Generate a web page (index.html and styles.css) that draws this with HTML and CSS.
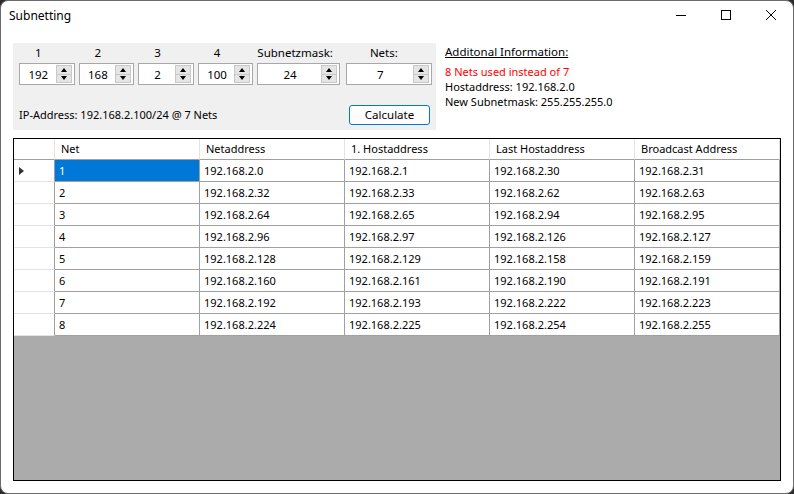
FILE: index.html
```html
<!DOCTYPE html>
<html>
<head>
<meta charset="utf-8">
<link rel="stylesheet" href="styles.css">
</head>
<body>
<div class="window">
  <div class="titlebar">
    <span class="title">Subnetting</span>
    <div class="controls">
      <span class="ctl"><svg width="12" height="12" viewBox="0 0 12 12"><path d="M1 6.5h10" stroke="#000" stroke-width="1"/></svg></span>
      <span class="ctl"><svg width="12" height="12" viewBox="0 0 12 12"><rect x="1.5" y="1.5" width="9" height="9" fill="none" stroke="#000" stroke-width="1"/></svg></span>
      <span class="ctl"><svg width="12" height="12" viewBox="0 0 12 12"><path d="M1 1l10 10M11 1L1 11" stroke="#000" stroke-width="1"/></svg></span>
    </div>
  </div>
  <div class="client">
    <div class="top">
      <div class="panel">
        <div class="fields">
          <div class="field f-oct"><div class="lbl">1</div><div class="spin"><span class="val">192</span><span class="btns"><span class="b up"></span><span class="b dn"></span></span></div></div>
          <div class="field f-oct"><div class="lbl">2</div><div class="spin"><span class="val">168</span><span class="btns"><span class="b up"></span><span class="b dn"></span></span></div></div>
          <div class="field f-oct"><div class="lbl">3</div><div class="spin"><span class="val">2</span><span class="btns"><span class="b up"></span><span class="b dn"></span></span></div></div>
          <div class="field f-oct"><div class="lbl">4</div><div class="spin"><span class="val">100</span><span class="btns"><span class="b up"></span><span class="b dn"></span></span></div></div>
          <div class="field f-mask"><div class="lbl lbl-left">Subnetzmask:</div><div class="spin"><span class="val">24</span><span class="btns"><span class="b up"></span><span class="b dn"></span></span></div></div>
          <div class="field f-nets"><div class="lbl">Nets:</div><div class="spin"><span class="val">7</span><span class="btns"><span class="b up"></span><span class="b dn"></span></span></div></div>
        </div>
        <div class="bottomrow">
          <span class="ipline">IP-Address: 192.168.2.100/24 @ 7 Nets</span>
          <button class="calc">Calculate</button>
        </div>
      </div>
      <div class="info">
        <div class="info-h">Additonal Information:</div>
        <div class="info-warn">8 Nets used instead of 7</div>
        <div>Hostaddress: 192.168.2.0</div>
        <div>New Subnetmask: 255.255.255.0</div>
      </div>
    </div>
    <div class="grid">
      <div class="row head">
        <div class="rh"></div>
        <div class="c">Net</div><div class="c">Netaddress</div><div class="c">1. Hostaddress</div><div class="c">Last Hostaddress</div><div class="c">Broadcast Address</div>
      </div>
      <div class="row"><div class="rh cur"><span class="arrow"></span></div><div class="c sel">1</div><div class="c">192.168.2.0</div><div class="c">192.168.2.1</div><div class="c">192.168.2.30</div><div class="c">192.168.2.31</div></div>
      <div class="row"><div class="rh"></div><div class="c">2</div><div class="c">192.168.2.32</div><div class="c">192.168.2.33</div><div class="c">192.168.2.62</div><div class="c">192.168.2.63</div></div>
      <div class="row"><div class="rh"></div><div class="c">3</div><div class="c">192.168.2.64</div><div class="c">192.168.2.65</div><div class="c">192.168.2.94</div><div class="c">192.168.2.95</div></div>
      <div class="row"><div class="rh"></div><div class="c">4</div><div class="c">192.168.2.96</div><div class="c">192.168.2.97</div><div class="c">192.168.2.126</div><div class="c">192.168.2.127</div></div>
      <div class="row"><div class="rh"></div><div class="c">5</div><div class="c">192.168.2.128</div><div class="c">192.168.2.129</div><div class="c">192.168.2.158</div><div class="c">192.168.2.159</div></div>
      <div class="row"><div class="rh"></div><div class="c">6</div><div class="c">192.168.2.160</div><div class="c">192.168.2.161</div><div class="c">192.168.2.190</div><div class="c">192.168.2.191</div></div>
      <div class="row"><div class="rh"></div><div class="c">7</div><div class="c">192.168.2.192</div><div class="c">192.168.2.193</div><div class="c">192.168.2.222</div><div class="c">192.168.2.223</div></div>
      <div class="row"><div class="rh"></div><div class="c">8</div><div class="c">192.168.2.224</div><div class="c">192.168.2.225</div><div class="c">192.168.2.254</div><div class="c">192.168.2.255</div></div>
      <div class="empty"></div>
    </div>
  </div>
</div>
</body>
</html>
```
FILE: styles.css
```css
* { box-sizing: border-box; }
html, body { margin: 0; padding: 0; }
body {
  width: 794px; height: 494px;
  background: #2b2b2b;
  font-family: "Noto Sans", "Liberation Sans", sans-serif;
  font-size: 11px;
  color: #000;
  overflow: hidden;
}
.window {
  width: 794px; height: 494px;
  background: #fff;
  border-radius: 8px;
  border: 1px solid #6b6b6b;
  display: flex;
  flex-direction: column;
  overflow: hidden;
}
.titlebar {
  height: 30px;
  display: flex;
  align-items: center;
  justify-content: space-between;
  padding-left: 8px;
}
.title { font-size: 12px; line-height: 16px; margin-top: -1px; }
.controls { display: flex; align-self: stretch; }
.ctl {
  width: 45px;
  display: flex; align-items: center; justify-content: center;
  margin-top: -2px;
}
.client {
  flex: 1;
  display: flex;
  flex-direction: column;
  padding: 12px 12px 12px 12px;
}
.top { display: flex; height: 87px; }
.panel {
  width: 423px;
  background: #f0f0f0;
  padding: 0 0 0 6px;
  display: flex;
  flex-direction: column;
}
.fields { display: flex; }
.field { display: flex; flex-direction: column; margin-right: 4px; }
.f-oct { width: 56px; }
.f-mask { width: 83px; margin-right: 6px; }
.f-nets { width: 87px; }
.lbl {
  height: 20px;
  line-height: 18px;
  padding-top: 1px;
  text-align: center;
  padding-right: 17px;
  font-size: 11.5px;
}
.lbl-left { text-align: left; padding-right: 0; }
.f-nets .lbl { padding-right: 10px; }
.spin {
  height: 22px;
  border: 1px solid #a8a8a8;
  background: #fff;
  display: flex;
  padding: 1px 1px 1px 1px;
}
.val {
  flex: 1;
  text-align: center;
  line-height: 19px;
  font-size: 11.5px;
}
.btns {
  width: 16px;
  display: flex;
  flex-direction: column;
  margin-right: 1px;
}
.b {
  flex: 1;
  background: #e5e5e5;
  border: 1px solid #c8c8c8;
  display: flex; align-items: center; justify-content: center;
}
.b.up { border-bottom-width: 0; }
.b::after {
  content: "";
  width: 0; height: 0;
  border-left: 3.5px solid transparent;
  border-right: 3.5px solid transparent;
}
.b.up::after { border-bottom: 4px solid #000; }
.b.dn::after { border-top: 4px solid #000; }
.bottomrow {
  display: flex;
  align-items: center;
  justify-content: space-between;
  margin-top: 20px;
  padding-right: 6px;
}
.ipline { line-height: 16px; }
.calc {
  width: 81px; height: 20px;
  border: 1px solid #0078d4;
  border-radius: 3px;
  background: #fdfdfd;
  font-family: inherit;
  font-size: 11.5px;
  padding: 0;
  color: #000;
  line-height: 16px;
}
.info { margin-left: 9px; padding-top: 1px; line-height: 15px; }
.info-h { text-decoration: underline; margin-bottom: 5px; font-size: 11.5px; }
.info-warn { color: #ff0000; }
.grid {
  margin-top: 8px;
  flex: 1;
  border: 1px solid #000;
  background: #ababab;
  display: flex;
  flex-direction: column;
}
.row {
  display: grid;
  grid-template-columns: 41px repeat(5, 145px);
  height: 22px;
  background: #fff;
}
.row.head { height: 21px; }
.c {
  border-right: 1px solid #a0a0a0;
  border-bottom: 1px solid #a0a0a0;
  padding-left: 4px;
  line-height: 21px;
  white-space: nowrap;
  overflow: hidden;
}
.head .c {
  border-right-color: #e3e3e3;
  border-bottom-color: #a0a0a0;
  padding-left: 6px;
  line-height: 20px;
}
.rh {
  border-right: 1px solid #a0a0a0;
  border-bottom: 1px solid #e3e3e3;
  display: flex; align-items: center;
  padding-left: 5px;
}
.head .rh { border-bottom-color: #a0a0a0; border-right-color: #e3e3e3; }
.sel { background: #0078d7; color: #fff; }
.arrow {
  width: 0; height: 0;
  border-top: 4.5px solid transparent;
  border-bottom: 4.5px solid transparent;
  border-left: 5px solid #333;
}
.empty { flex: 1; }
```
